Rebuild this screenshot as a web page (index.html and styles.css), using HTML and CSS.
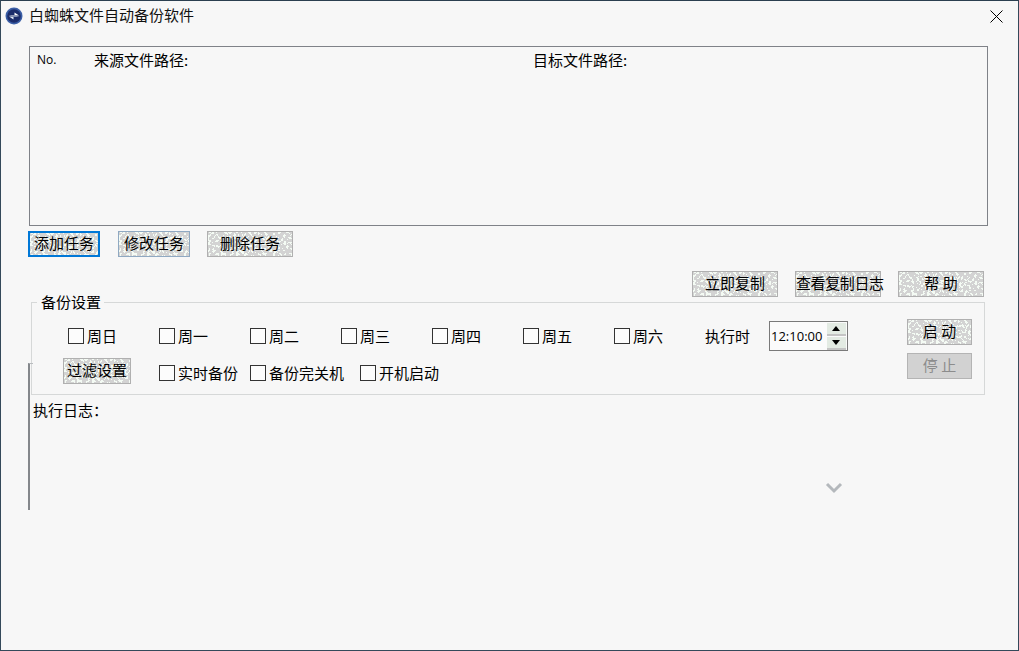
FILE: index.html
```html
<!DOCTYPE html>
<html lang="zh">
<head>
<meta charset="utf-8">
<title>白蜘蛛文件自动备份软件</title>
<link rel="stylesheet" href="styles.css">
</head>
<body>
<div class="window">
  <header class="titlebar">
    <svg class="app-icon" width="18" height="18" viewBox="0 0 18 18">
      <circle cx="9" cy="9" r="8.5" fill="#3a5ea6"/>
      <circle cx="9" cy="9" r="6.8" fill="#1b2c6b"/>
      <path d="M3.5 8h6V5.6L14 8.4H6.5z" fill="#fff"/>
      <path d="M14.5 10h-6v2.4L4 9.6h7.5z" fill="#e4ebf6"/>
    </svg>
    <span class="title">白蜘蛛文件自动备份软件</span>
    <svg class="close" width="13" height="13" viewBox="0 0 13 13">
      <path d="M.5.5l12 12M12.5.5l-12 12" stroke="#000" fill="none"/>
    </svg>
  </header>

  <main class="content">
    <section class="tasklist">
      <span class="col-no">No.</span>
      <span>来源文件路径:</span>
      <span>目标文件路径:</span>
    </section>

    <div class="task-actions">
      <button class="btn btn-focus">添加任务</button>
      <button class="btn btn-hover">修改任务</button>
      <button class="btn btn-wide">删除任务</button>
    </div>

    <div class="tools">
      <button class="btn btn-wide">立即复制</button>
      <button class="btn btn-wide btn-tight">查看复制日志</button>
      <button class="btn btn-wide">帮 助</button>
    </div>

    <fieldset class="settings">
      <legend>备份设置</legend>
      <div class="settings-body">
        <div class="schedule">
          <label class="check"><span class="box"></span>周日</label>
          <label class="check"><span class="box"></span>周一</label>
          <label class="check"><span class="box"></span>周二</label>
          <label class="check"><span class="box"></span>周三</label>
          <label class="check"><span class="box"></span>周四</label>
          <label class="check"><span class="box"></span>周五</label>
          <label class="check"><span class="box"></span>周六</label>
          <span class="exec-label">执行时</span>
          <div class="spinner">
            <span class="time">12:10:00</span>
            <span class="spin-btns">
              <span class="spin spin-up"></span>
              <span class="spin spin-down"></span>
            </span>
          </div>
          <button class="btn btn-filter">过滤设置</button>
          <label class="check check-low"><span class="box"></span>实时备份</label>
          <label class="check check-low"><span class="box"></span>备份完关机</label>
          <label class="check check-boot"><span class="box"></span>开机启动</label>
        </div>
        <div class="run-actions">
          <button class="btn btn-run">启 动</button>
          <button class="btn btn-stop" disabled>停 止</button>
        </div>
      </div>
    </fieldset>

    <p class="log-label">执行日志：</p>
  </main>

  <div class="log-edge"></div>
  <svg class="chevron" width="18" height="12" viewBox="0 0 18 12">
    <path d="M2 2l7 7 7-7" fill="none" stroke="#b4b8bc" stroke-width="3"/>
  </svg>
</div>
</body>
</html>
```
FILE: styles.css
```css
* { box-sizing: border-box; }
html, body { margin: 0; height: 100%; }
body {
  font-family: "Noto Sans CJK SC", "Noto Sans", sans-serif;
  font-size: 15px;
  line-height: 20px;
  color: #000;
  background: #f7f7f7;
}
.window {
  position: relative;
  width: 1019px;
  height: 651px;
  border: 1px solid #34495a;
  border-top-color: #2b3f50;
  background: #f7f7f7;
  overflow: hidden;
}
.titlebar {
  display: flex;
  align-items: center;
  height: 30px;
  padding: 0 15px 0 4px;
}
.app-icon { flex: none; }
.title { margin-left: 6px; color: #111; line-height: 18px; padding-bottom: 2px; }
.close { margin-left: auto; }

.content {
  display: flex;
  flex-direction: column;
  padding: 15px 30px 0 28px;
}
.tasklist {
  display: grid;
  grid-template-columns: 57px 439px 1fr;
  align-content: start;
  height: 180px;
  padding: 3px 7px;
  border: 1px solid #7f8288;
}
.col-no { font-family: "Open Sans", "Liberation Sans", sans-serif; font-size: 12px; }

.btn {
  height: 26px;
  width: 72px;
  padding: 0 0 2px;
  border: 1px solid #b0b0b0;
  border-radius: 0;
  font: inherit;
  color: #000;
  white-space: nowrap;
  background-color: #d3d3d3;
  background-image: url("data:image/svg+xml,%3Csvg xmlns='http://www.w3.org/2000/svg' width='120' height='40'%3E%3Cfilter id='n' x='0' y='0' width='100%25' height='100%25'%3E%3CfeTurbulence type='fractalNoise' baseFrequency='0.38' numOctaves='2' seed='7' stitchTiles='stitch'/%3E%3CfeColorMatrix values='0 0 0 0 0.9 0 0 0 0 0.97 0 0 0 0 0.9 1 0 0 0 0'/%3E%3CfeComponentTransfer%3E%3CfeFuncA type='discrete' tableValues='0 0 0 0 1 1 1'/%3E%3C/feComponentTransfer%3E%3C/filter%3E%3Crect width='120' height='40' filter='url(%23n)'/%3E%3C/svg%3E");
}
.btn-focus { border: 2px solid #0078d7; }
.btn-hover { border-color: #8fa9c2; }
.btn-wide { width: 86px; }
.btn-tight { letter-spacing: -0.4px; }

.task-actions {
  display: flex;
  margin: 5px 0 0 -1px;
}
.task-actions .btn-hover { margin-left: 18px; }
.task-actions .btn-wide { margin-left: 17px; }

.tools {
  display: flex;
  justify-content: flex-end;
  gap: 17px;
  margin-top: 14px;
  padding-right: 4px;
}

.settings {
  margin: -5px 3px 0 2px;
  padding: 0;
  border: 1px solid #d6d8d8;
  min-width: 0;
  height: 103px;
}
.settings legend {
  margin-left: 5px;
  padding: 0 3px 0 4px;
}
.settings-body {
  display: flex;
  justify-content: space-between;
  padding: 6px 12px 0 36px;
}
.schedule {
  display: grid;
  grid-template-columns: repeat(7, 91px) 64px auto;
  grid-auto-rows: 36px;
  align-items: center;
}
.check {
  display: flex;
  align-items: center;
  gap: 3px;
  white-space: nowrap;
  line-height: 18px;
}
.check-low { transform: translateY(1px); }
.check-boot { margin-left: 19px; transform: translateY(1px); }
.box {
  flex: none;
  width: 16px;
  height: 16px;
  border: 1px solid #333;
  background: #fcfcfc;
}
.exec-label { display: block; line-height: 18px; }
.spinner {
  display: flex;
  align-items: center;
  justify-content: space-between;
  width: 79px;
  height: 30px;
  padding: 0 1px;
  border: 1px solid #7a7a7a;
  background: #fbfbfb;
}
.time { font-family: "Open Sans", "Liberation Sans", sans-serif; font-size: 13px; }
.spin-btns { display: flex; flex-direction: column; gap: 1px; }
.spin {
  position: relative;
  display: block;
  width: 19px;
  height: 13px;
  background: #e3ebe3;
  border-bottom: 2px solid #c4c4c4;
}
.spin::after {
  content: "";
  position: absolute;
  left: 5px;
  width: 0;
  height: 0;
  border-left: 4px solid transparent;
  border-right: 4px solid transparent;
}
.spin-up::after { top: 3px; border-bottom: 5px solid #000; }
.spin-down::after { top: 3px; border-top: 5px solid #000; }

.btn-filter { width: 68px; margin-left: -5px; transform: translateY(-1px); }

.run-actions {
  display: flex;
  flex-direction: column;
  gap: 8px;
  padding-top: 1px;
}
.btn-run, .btn-stop { width: 65px; }
.btn-stop {
  background: #d2d2d2;
  border-color: #b4b4b4;
  color: #8c8c8c;
}

.log-label { margin: 6px 0 0 4px; line-height: 18px; }

.log-edge {
  position: absolute;
  left: 27px;
  top: 362px;
  width: 5px;
  height: 147px;
  border-left: 2px solid #84878b;
  border-top: 1px solid #b9bcbf;
}
.chevron { position: absolute; left: 824px; top: 481px; }
```
